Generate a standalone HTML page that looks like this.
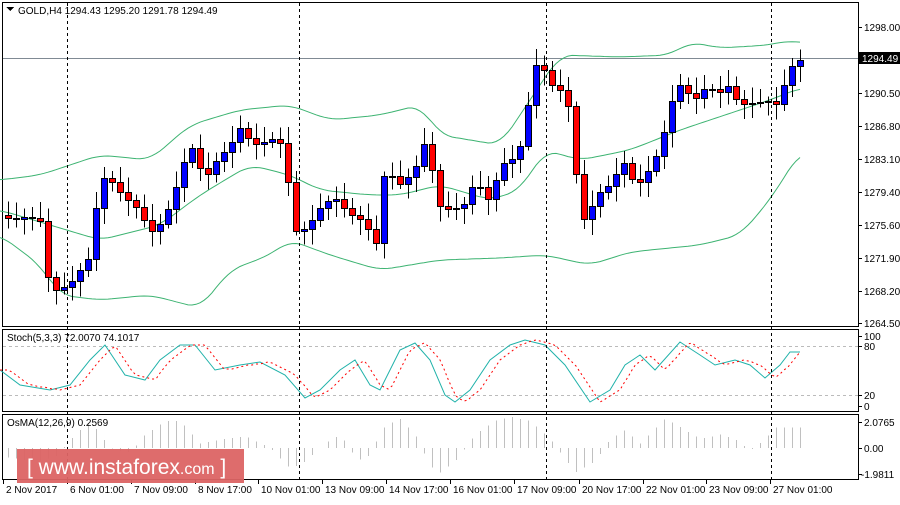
<!DOCTYPE html><html><head><meta charset="utf-8"><style>
body{margin:0;width:900px;height:500px;background:#fff;overflow:hidden;font-family:"Liberation Sans",sans-serif}
svg text{font-family:"Liberation Sans",sans-serif;font-size:10px;fill:#000}
</style></head><body>
<svg id="s" width="900" height="500" xmlns="http://www.w3.org/2000/svg" shape-rendering="crispEdges">
<rect x="0" y="0" width="900" height="500" fill="#fff"/>
<g fill="none" stroke="#000" stroke-width="1">
<rect x="2.5" y="2.5" width="856" height="324"/>
<rect x="2.5" y="329.5" width="856" height="82"/>
<rect x="2.5" y="414.5" width="856" height="65"/>
</g>
<line x1="3" y1="58.5" x2="858" y2="58.5" stroke="#808a94"/>
<g id="g"></g>
<g stroke="#000" stroke-dasharray="3,3">
<line x1="67.5" y1="3" x2="67.5" y2="480"/><line x1="299.5" y1="3" x2="299.5" y2="480"/>
<line x1="546.5" y1="3" x2="546.5" y2="480"/><line x1="771.5" y1="3" x2="771.5" y2="480"/>
</g>
<path d="M6 7 L14 7 L10 11Z" fill="#000"/>
<text x="18" y="14">GOLD,H4  1294.43 1295.20 1291.78 1294.49</text>
<text x="7" y="341">Stoch(5,3,3) 72.0070 74.1017</text>
<text x="7" y="426">OsMA(12,26,9) 0.2569</text>
<g id="ax"></g>
<rect x="859" y="52" width="41" height="12" fill="#000"/>
<text x="862" y="62" style="fill:#fff">1294.49</text>
<rect x="17" y="449" width="227" height="34" fill="#dc6464" opacity="0.95"/>
<text x="27" y="474" style="fill:#fff;font-size:21px">[  www.instaforex<tspan style="font-size:16px">.com</tspan> ]</text>
</svg>
<script>
const NS="http://www.w3.org/2000/svg",g=document.getElementById('g'),ax=document.getElementById('ax');
function el(t,a,p){const e=document.createElementNS(NS,t);for(const k in a)e.setAttribute(k,a[k]);(p||g).appendChild(e);return e}
function interp(pts,x){for(let i=0;i<pts.length-1;i++){if(x<=pts[i+1][0]){const[a,b]=pts[i],[c,d]=pts[i+1];return b+(d-b)*(x-a)/(c-a)}}return pts[pts.length-1][1]}
function line(pts,st,extra){el('path',Object.assign({d:'M'+pts.map(p=>p.join(' ')).join('L'),fill:'none',stroke:st,'shape-rendering':'auto'},extra||{}))}
function smooth(pts){const o=[];for(let x=0;x<=800;x+=4){let s=0,n=0;for(let d=-12;d<=12;d+=4){s+=interp(pts,Math.min(800,Math.max(0,x+d)));n++}o.push([x,+(s/n).toFixed(1)])}return o}
el('line',{x1:3,y1:346.5,x2:858,y2:346.5,stroke:'#bbb','stroke-dasharray':'3,3'});
el('line',{x1:3,y1:395.5,x2:858,y2:395.5,stroke:'#bbb','stroke-dasharray':'3,3'});
const up=[[0,180],[40,175],[100,155],[150,160],[190,125],[240,110],[290,105],[330,120],[380,115],[420,105],[440,135],[500,145],[530,100],[560,55],[620,57],[670,55],[690,42],[720,48],[770,45],[790,40],[800,43]];
const md=[[0,210],[50,225],[100,240],[160,225],[200,195],[250,165],[290,175],[320,190],[370,195],[400,195],[440,185],[490,200],[520,190],[545,150],[580,160],[630,150],[680,130],[740,110],[770,100],[800,88]];
const lo=[[0,235],[40,265],[60,295],[100,300],[150,295],[200,308],[230,270],[270,255],[290,240],[330,255],[380,270],[440,260],[500,258],[545,255],[590,265],[630,252],[700,245],[740,235],[770,200],[800,152]];
[up,md,lo].forEach(p=>line(smooth(p),'#3cb371'));
const cl=[[8,215],[20,215],[40,225],[50,290],[60,285],[75,280],[90,260],[100,175],[110,175],[125,200],[140,215],[150,230],[165,215],[180,180],[190,145],[205,175],[215,160],[230,150],[240,130],[255,140],[270,140],[285,150],[292,230],[305,225],[320,210],[335,200],[350,210],[365,220],[375,255],[385,170],[400,180],[415,170],[427,140],[437,205],[450,205],[465,205],[475,185],[490,200],[500,160],[515,160],[525,140],[532,65],[540,63],[548,70],[555,90],[565,90],[572,135],[580,220],[588,218],[595,190],[610,185],[625,165],[635,185],[650,165],[660,150],[668,120],[676,90],[684,80],[692,100],[700,88],[710,90],[718,100],[725,85],[733,90],[740,105],[748,95],[756,110],[764,100],[772,110],[780,100],[788,65],[796,60],[804,57]];
let prev=215;
for(let x=8;x<=804;x+=8){const c=Math.round(interp(cl,x)+Math.sin(x*1.7)*4);const o=prev;const top=Math.min(o,c),bot=Math.max(o,c);
const hi=top-4-Math.abs(Math.sin(x*0.9))*12,lw=bot+4+Math.abs(Math.cos(x*1.3))*12;
el('line',{x1:x+.5,y1:hi,x2:x+.5,y2:lw,stroke:'#000'});
el('rect',{x:x-2.5,y:top+.5,width:6,height:Math.max(1,bot-top),fill:c<o?'#0000ff':'#ff0000',stroke:'#000'});prev=c;}
const st=[[0,370],[20,385],[50,390],[70,385],[90,360],[105,345],[125,375],[145,380],[160,360],[180,345],[195,345],[215,370],[240,365],[260,362],[285,375],[305,398],[320,390],[340,370],[355,360],[370,385],[380,390],[400,350],[415,343],[430,360],[445,395],[455,402],[470,390],[490,360],[510,345],[525,340],[545,345],[565,365],[590,402],[610,390],[625,365],[640,355],[655,370],[680,342],[700,355],[715,365],[735,360],[750,365],[765,378],[780,365],[790,352],[800,352]];
line(st,'#20b2aa');
const sg=[];for(let x=0;x<=800;x+=4)sg.push([x,Math.round(interp(st,Math.max(0,x-10)))]);
line(sg,'#ff0000',{'stroke-dasharray':'2,3'});
for(let x=8;x<=804;x+=8){const v=(375-interp(st,x+15))*0.9;el('line',{x1:x+.5,y1:448,x2:x+.5,y2:448-v,stroke:'#c0c0c0'});}
const pl=[['1298.00',27],['1290.50',93],['1286.80',126],['1283.10',159],['1279.40',192],['1275.60',225],['1271.90',258],['1268.20',291],['1264.50',323],['100',336],['80',346],['20',395],['0',406],['2.0765',422],['0.00',448],['-1.9811',474]];
pl.forEach(([t,y])=>{el('line',{x1:858,y1:y+.5,x2:862,y2:y+.5,stroke:'#000'},ax);el('text',{x:t[0]=='-'?861:864,y:y+4},ax).textContent=t});
const xl=[['2 Nov 2017',3],['6 Nov 01:00',67],['7 Nov 09:00',131],['8 Nov 17:00',195],['10 Nov 01:00',258],['13 Nov 09:00',322],['14 Nov 17:00',386],['16 Nov 01:00',450],['17 Nov 09:00',514],['20 Nov 17:00',579],['22 Nov 01:00',643],['23 Nov 09:00',706],['27 Nov 01:00',770]];
xl.forEach(([t,x])=>{el('line',{x1:x+.5,y1:480,x2:x+.5,y2:484,stroke:'#000'},ax);el('text',{x:x+3,y:493},ax).textContent=t});
</script>
</body></html>
